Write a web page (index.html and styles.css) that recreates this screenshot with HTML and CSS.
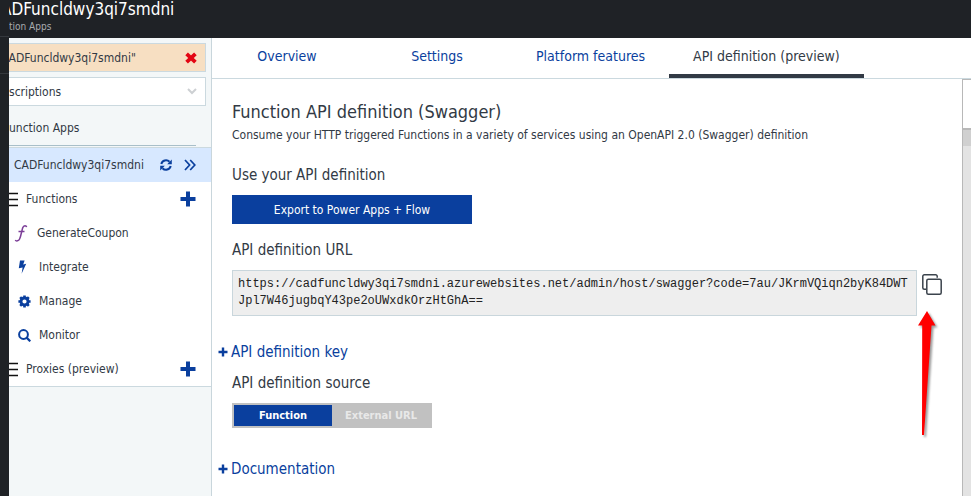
FILE: index.html
```html
<!DOCTYPE html>
<html lang="en">
<head>
<meta charset="utf-8">
<title>Function Apps</title>
<link rel="stylesheet" href="styles.css">
</head>
<body>
<div class="rail"><span></span><span></span></div>
<div class="shell">
  <header class="top">
    <div class="top-title">ADFuncldwy3qi7smdni</div>
    <div class="top-sub">tion Apps</div>
  </header>
  <div class="main">
    <nav class="side" aria-label="Function apps">
      <div class="field search">
        <input type="text" aria-label="Search" value="CADFuncldwy3qi7smdni&quot;">
        <button type="button" class="icon-btn" aria-label="Clear">
          <svg width="12" height="12" viewBox="0 0 12 12"><path d="M1.600 1.800l8.800 8.400M10.400 1.800l-8.800 8.400" stroke="#e30613" stroke-width="3.800"/></svg>
        </button>
      </div>
      <div class="field subs">
        <select aria-label="Subscriptions"><option>scriptions</option></select>
        <svg class="chev" width="10" height="7" viewBox="0 0 10 7"><path d="M1 1l4 4 4-4" fill="none" stroke="#cdd0d3" stroke-width="2"/></svg>
      </div>
      <div class="group">unction Apps</div>
      <ul class="tree">
        <li class="row app">
          <a href="#">CADFuncldwy3qi7smdni</a>
          <button type="button" class="icon-btn" aria-label="Refresh">
            <svg width="12" height="12" viewBox="0 0 12 12"><g fill="none" stroke="#0a3f9e" stroke-width="2"><path d="M1.3 5A4.8 4.8 0 0 1 9.5 2.8"/><path d="M10.7 7A4.8 4.8 0 0 1 2.5 9.2"/></g><path d="M11.8 .6v4.6H7.2zM.2 11.4V6.8h4.6z" fill="#0a3f9e"/></svg>
          </button>
          <button type="button" class="icon-btn" aria-label="Expand">
            <svg width="12" height="12" viewBox="0 0 12 12"><path d="M1 1l4.6 5L1 11M6.2 1l4.6 5-4.6 5" fill="none" stroke="#0a3f9e" stroke-width="1.7"/></svg>
          </button>
        </li>
        <li class="row branch">
          <svg width="9" height="16" viewBox="0 0 9 16"><path d="M0 2.500h9M0 8.500h9M0 14.500h9" stroke="#111" stroke-width="1.400"/></svg>
          <a href="#">Functions</a>
          <button type="button" class="icon-btn" aria-label="New function">
            <svg width="16" height="16" viewBox="0 0 16 16"><path d="M8 .5v15M.5 8h15" stroke="#0a3f9e" stroke-width="4" stroke-linejoin="round"/></svg>
          </button>
        </li>
        <li class="row fn">
          <svg width="14" height="18" viewBox="0 0 14 18"><path d="M12.6 3.2c-.2-1.8-2.9-2.3-3.9.6C7.7 7 7 12 5.600 15c-.9 2-3.500 2.600-4.300 1M4.500 7.500h6" fill="none" stroke="#7c3f98" stroke-width="1.500"/></svg>
          <a href="#">GenerateCoupon</a>
        </li>
        <li class="row leaf">
          <svg width="13" height="14" viewBox="0 0 13 14"><path d="M2 .5h4.600L5.200 4.500l3-.7L3.600 13.800l1-6.400-3.800.9z" fill="#0a3f9e"/></svg>
          <a href="#">Integrate</a>
        </li>
        <li class="row leaf">
          <svg width="13" height="13" viewBox="0 0 13 13"><circle cx="6.500" cy="6.500" r="3.500" fill="none" stroke="#0a3f9e" stroke-width="2.800"/><path d="M6.500 .4v2M6.500 10.600v2M.4 6.500h2M10.600 6.500h2M2.200 2.200l1.400 1.400M9.400 9.400l1.400 1.400M10.800 2.200L9.400 3.600M3.600 9.400l-1.400 1.400" stroke="#0a3f9e" stroke-width="2.600"/></svg>
          <a href="#">Manage</a>
        </li>
        <li class="row leaf">
          <svg width="13" height="13" viewBox="0 0 13 13"><circle cx="5.500" cy="5.500" r="4.400" fill="none" stroke="#0a3f9e" stroke-width="2"/><path d="M8.600 8.600l3.700 3.700" stroke="#0a3f9e" stroke-width="2.200"/></svg>
          <a href="#">Monitor</a>
        </li>
        <li class="row branch">
          <svg width="9" height="16" viewBox="0 0 9 16"><path d="M0 2.500h9M0 8.500h9M0 14.500h9" stroke="#111" stroke-width="1.400"/></svg>
          <a href="#">Proxies (preview)</a>
          <button type="button" class="icon-btn" aria-label="New proxy">
            <svg width="16" height="16" viewBox="0 0 16 16"><path d="M8 .5v15M.5 8h15" stroke="#0a3f9e" stroke-width="4"/></svg>
          </button>
        </li>
      </ul>
    </nav>
    <section class="pane">
      <div class="tabs">
        <a href="#">Overview</a>
        <a href="#">Settings</a>
        <a href="#">Platform features</a>
        <a href="#" class="current">API definition (preview)</a>
      </div>
      <div class="body">
        <main class="content">
          <h1>Function API definition (Swagger)</h1>
          <p>Consume your HTTP triggered Functions in a variety of services using an OpenAPI 2.0 (Swagger) definition</p>
          <h2>Use your API definition</h2>
          <button type="button" class="export">Export to Power Apps + Flow</button>
          <h2><label for="url">API definition URL</label></h2>
          <div class="url-row">
            <textarea id="url" rows="2" readonly>https://cadfuncldwy3qi7smdni.azurewebsites.net/admin/host/swagger?code=7au/JKrmVQiqn2byK84DWTJpl7W46jugbqY43pe2oUWxdkOrzHtGhA==</textarea>
            <button type="button" class="icon-btn copy" aria-label="Copy">
              <svg width="20" height="21" viewBox="0 0 20 21"><g fill="none" stroke="#3b434c" stroke-width="1.500"><path d="M4 15.200H2.300A1.500 1.500 0 0 1 .8 13.700V2.300A1.500 1.500 0 0 1 2.300.8h11.400a1.500 1.500 0 0 1 1.500 1.500v1.500"/><rect x="4.800" y="5.300" width="14.400" height="14.900" rx="1.500"/></g></svg>
            </button>
            <svg class="pointer" width="24" height="132" viewBox="0 0 24 132"><path d="M10 1l8.500 14.500h-4L7 125H5l.2-109.500H1z" fill="#ff0000"/></svg>
          </div>
          <button type="button" class="expander key"><svg width="10" height="10" viewBox="0 0 10 10"><path d="M5 .5v9M.5 5h9" stroke="#0a3f9e" stroke-width="2.400"/></svg>API definition key</button>
          <h2>API definition source</h2>
          <div class="toggle">
            <button type="button" class="on">Function</button>
            <button type="button">External URL</button>
          </div>
          <button type="button" class="expander docs"><svg width="10" height="10" viewBox="0 0 10 10"><path d="M5 .5v9M.5 5h9" stroke="#0a3f9e" stroke-width="2.400"/></svg>Documentation</button>
        </main>
        <div class="scroll"><div class="thumb"></div><div class="track-top"></div></div>
      </div>
    </section>
  </div>
</div>
</body>
</html>
```
FILE: styles.css
```css
* { box-sizing: border-box; }
body {
  margin: 0;
  display: flex;
  min-height: 100vh;
  overflow: hidden;
  font-family: "DejaVu Sans Condensed", "DejaVu Sans", sans-serif;
  font-size: 12px;
  color: #323a45;
  background: #fff;
}
button, input, select { font: inherit; color: inherit; }
a { color: inherit; text-decoration: none; }
svg { display: block; flex: none; }
ul { list-style: none; margin: 0; padding: 0; }

.rail { width: 9px; flex: none; background: #1f2226; }
.rail span { display: block; height: 37px; border-bottom: 1px solid #34383d; }
.shell { flex: 1; min-width: 0; display: flex; flex-direction: column; }

.top { height: 38px; background: #1f2226; overflow: hidden; white-space: nowrap; }
.top-title { margin-left: -8px; line-height: 18px; font-size: 17px; color: #fff; }
.top-sub { line-height: 18px; font-size: 10px; color: #a9acb0; }

.main { flex: 1; display: flex; }
.side { width: 203px; flex: none; overflow: hidden; background: #f3f7f8; border-right: 1px solid #c9d6dc; padding-top: 5px; }
.field { display: flex; align-items: center; height: 29px; margin: 0 5px 5px 0; border: 1px solid #cbd9df; border-left: 0; overflow: hidden; }
.field input, .field select { flex: 1; min-width: 0; height: 100%; border: 0; padding: 0; background: none; appearance: none; outline: 0; }
.field input { margin-left: -8px; }
.search { background: #f7dfc2; padding-right: 8px; }
.subs { background: #fff; padding-right: 8px; }
.icon-btn { border: 0; padding: 0; background: none; flex: none; }
.group { height: 35px; margin-right: 15px; line-height: 34px; border-bottom: 1px solid #a8bfc9; }
.tree { margin-top: 1px; border: solid #cbd9df; border-width: 1px 0; background: #fff; }
.row { display: flex; align-items: center; height: 34px; padding-right: 15px; white-space: nowrap; }
.row a { flex: 1; }
.app { background: #d7e8ff; padding-left: 5px; gap: 12px; }
.branch { gap: 8px; }
.fn { padding-left: 5px; gap: 9px; }
.leaf { padding-left: 9px; gap: 8px; }

.pane { flex: 1; min-width: 0; display: flex; flex-direction: column; }
.tabs { display: flex; height: 41px; border-bottom: 1px solid #cbd9df; font-size: 14px; color: #0a3f9e; }
.tabs a { min-width: 150px; padding: 0 24px; line-height: 36px; text-align: center; white-space: nowrap; }
.tabs .current { color: #323a45; border-bottom: 4px solid #323a45; }
.body { flex: 1; display: flex; }
.content { flex: 1; min-width: 0; padding: 22px 20px 0; }
h1, h2, p { margin: 0; font-weight: normal; }
h1 { font-size: 18px; line-height: 22px; }
p { line-height: 24px; }
h2 { font-size: 15px; line-height: 20px; }
p + h2 { margin-top: 18px; }
.export { display: block; width: 240px; height: 29px; margin: 10px 0 16px; border: 0; background: #0a3f9e; color: #fff; }
.url-row { position: relative; display: flex; align-items: flex-start; gap: 5px; margin-top: 10px; }
textarea { flex: 1; min-width: 0; height: 46px; padding: 5px; border: 1px solid #c9d6dc; background: #eee; color: #222; font: 12px/17px "Liberation Mono", monospace; word-break: break-all; resize: none; overflow: hidden; outline: 0; }
.copy { margin-top: 4px; }
.pointer { position: absolute; right: 1px; top: 40px; filter: drop-shadow(2px 2px 1px #999); }
.expander { display: flex; align-items: center; gap: 3px; margin-left: -14px; padding: 0; border: 0; background: none; color: #0a3f9e; font-size: 15px; line-height: 20px; }
.key { margin-top: 26px; margin-bottom: 11px; }
.toggle { display: flex; width: 200px; height: 25px; margin: 10px 0 31px; padding: 2px; background: #c1c1c1; }
.toggle button { flex: 1; border: 0; padding: 0; background: none; color: #e8e8e8; font-size: 11px; font-weight: bold; }
.toggle .on { background: #0a3f9e; color: #fff; }
.scroll { width: 9px; flex: none; background: #e3e3e3; border-left: 1px solid #b8b8b8; }
.thumb { height: 51px; background: #fff; border: solid #b8b8b8; border-width: 1px 0 2px; }
.track-top { height: 16px; background: #d0d0d0; }
```
